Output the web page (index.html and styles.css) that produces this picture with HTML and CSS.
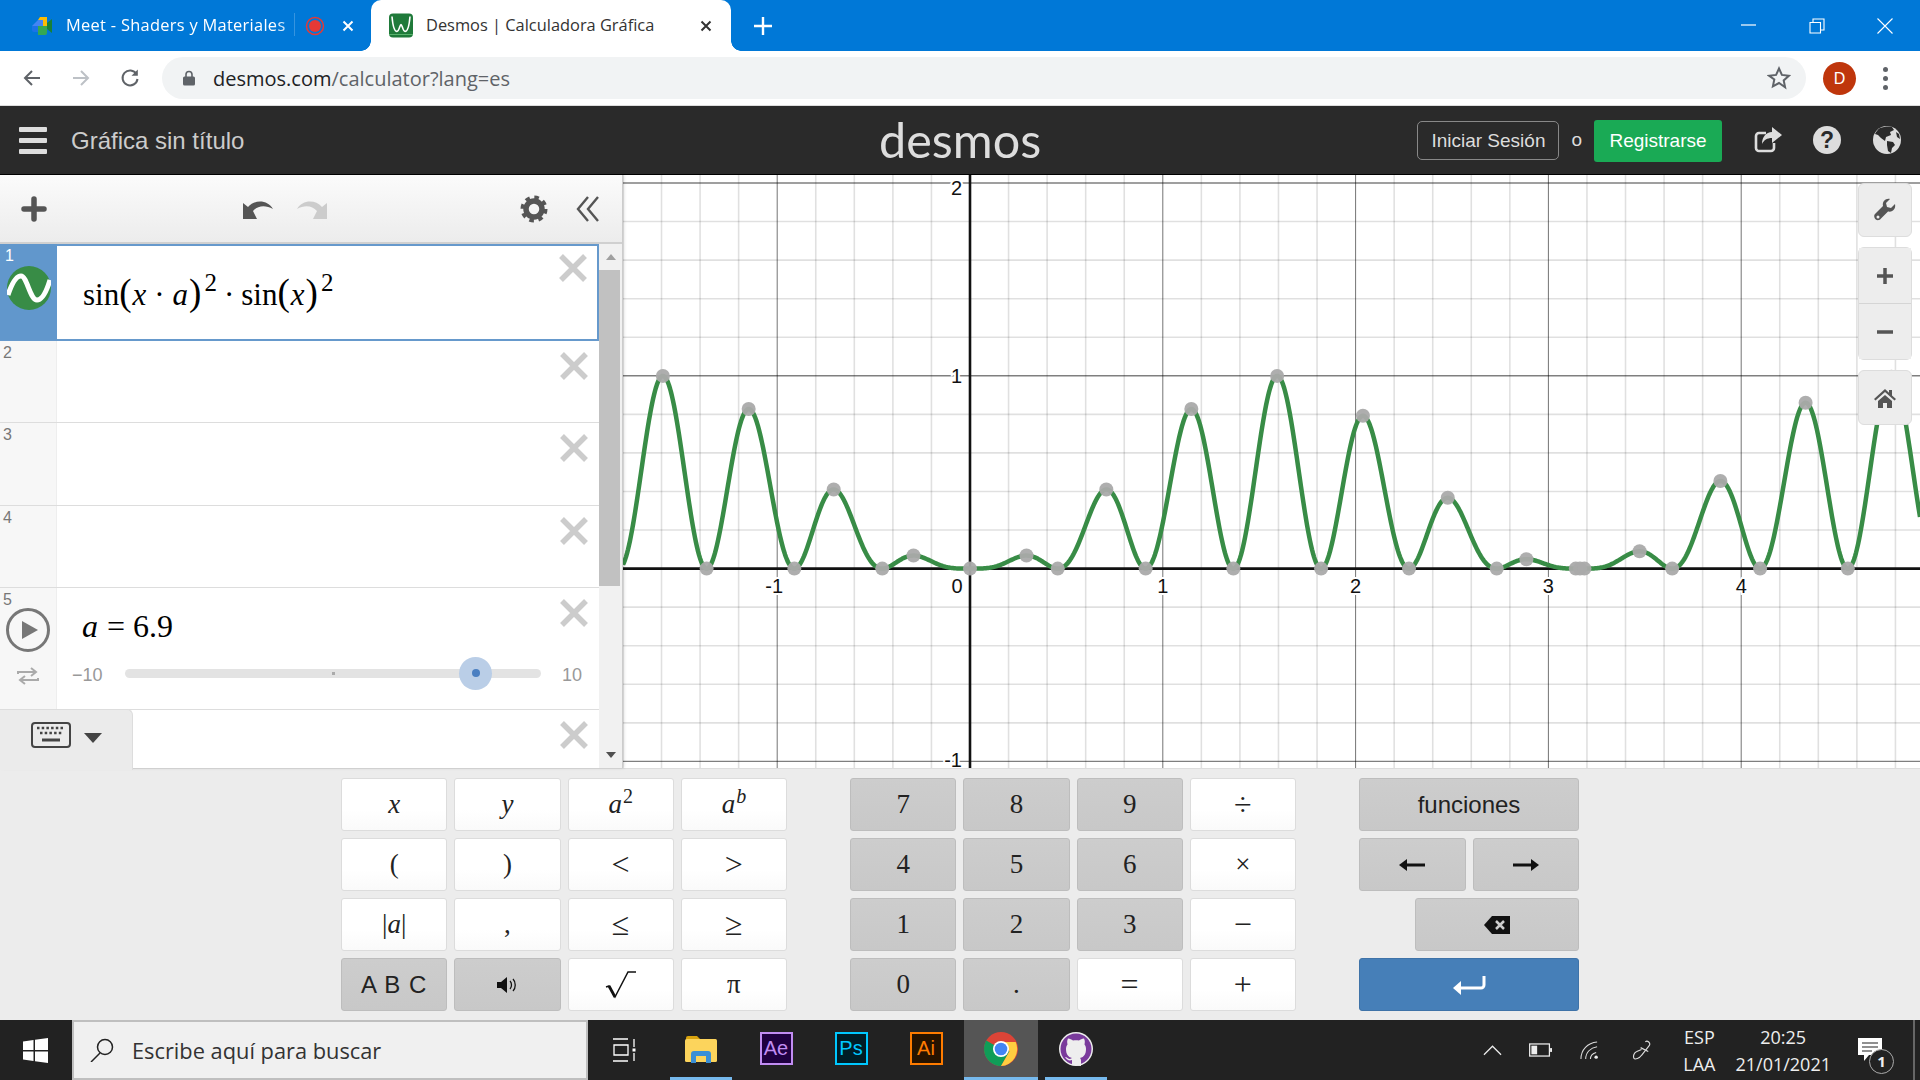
FILE: index.html
```html
<!DOCTYPE html>
<html lang="es">
<head>
<meta charset="UTF-8">
<title>Desmos | Calculadora Gráfica</title>
<link rel="stylesheet" href="styles.css">
</head>
<body>
<div class="app">

  <!-- browser tabs -->
  <div class="tabstrip">
    <div class="tab tab-bg">
      <svg class="favicon" viewBox="0 0 22 22"><path d="M1 11 7 5h5v6H1z" fill="#4285f4"/><path d="M7 5l2-3h7v9h-4V5z" fill="#fbbc04"/><path d="M1 11h6v6H3a2 2 0 0 1-2-2z" fill="#1a73e8"/><path d="M7 11h9v7a2 2 0 0 1-2 2H7z" fill="#34a853"/><path d="M16 8l5-4v14l-5-4z" fill="#188038"/></svg>
      <span class="tab-title tab-title-fade">Meet - Shaders y Materiales</span>
      <svg class="rec" viewBox="0 0 20 20"><circle cx="10" cy="10" r="8.5" fill="none" stroke="#e53935" stroke-width="1.5"/><circle cx="10" cy="10" r="6" fill="#e53935"/></svg>
      <svg class="tab-x" viewBox="0 0 12 12"><path d="M1.5 1.5l9 9M10.5 1.5l-9 9" stroke="#fff" stroke-width="2"/></svg>
    </div>
    <div class="tab tab-active">
      <svg class="favicon favicon-desmos" viewBox="0 0 24 24"><rect width="24" height="24" rx="4" fill="#1f7a3a"/><path d="M3 3c1 12 3 15 5 15s3-7 4-7 2 7 4 7 4-3 5-15" fill="none" stroke="#fff" stroke-width="1.6"/><path d="M0 21h24" stroke="#59b36d" stroke-width="1"/></svg>
      <span class="tab-title">Desmos | Calculadora Gráfica</span>
      <svg class="tab-x" viewBox="0 0 12 12"><path d="M1.5 1.5l9 9M10.5 1.5l-9 9" stroke="#333" stroke-width="2"/></svg>
    </div>
    <svg class="newtab" viewBox="0 0 18 18"><path d="M9 0v18M0 9h18" stroke="#fff" stroke-width="2.4"/></svg>
    <div class="winctl">
      <svg viewBox="0 0 16 16"><path d="M0 7h15" stroke="#fff" stroke-width="1.2"/></svg>
      <svg viewBox="0 0 16 16"><path d="M1 4.5h10.5V15H1zM4 4.5V1h11v11h-3.500" fill="none" stroke="#fff" stroke-width="1.1"/></svg>
      <svg viewBox="0 0 16 16"><path d="M.5.5l15 15M15.500.5l-15 15" stroke="#fff" stroke-width="1.1"/></svg>
    </div>
  </div>

  <!-- browser toolbar -->
  <div class="navbar">
    <svg class="nav-ico" viewBox="0 0 20 20"><path d="M18 10H3M10 3l-7 7 7 7" fill="none" stroke="#5f6368" stroke-width="2"/></svg>
    <svg class="nav-ico" viewBox="0 0 20 20"><path d="M2 10h15M10 3l7 7-7 7" fill="none" stroke="#bdc1c6" stroke-width="2"/></svg>
    <svg class="nav-ico" viewBox="0 0 20 20"><path d="M16.5 6A7.500 7.500 0 1 0 17.500 11" fill="none" stroke="#5f6368" stroke-width="2"/><path d="M17.800 1.500v6.300h-6.300z" fill="#5f6368"/></svg>
    <div class="omnibox">
      <svg class="lock" viewBox="0 0 12 16"><path d="M3 7V4.500a3 3 0 0 1 6 0V7" fill="none" stroke="#5f6368" stroke-width="1.6"/><rect y="6.500" width="12" height="9" rx="1.5" fill="#5f6368"/></svg>
      <span class="url">desmos.com<span class="url-rest">/calculator?lang=es</span></span>
      <svg class="star" viewBox="0 0 24 24"><path d="M12 2.500l2.900 6.400 7 .8-5.200 4.700 1.400 6.900L12 17l-6.100 3.300 1.400-6.900L2.100 9.700l7-.8z" fill="none" stroke="#5f6368" stroke-width="2"/></svg>
    </div>
    <div class="avatar">D</div>
    <div class="kebab"><i></i><i></i><i></i></div>
  </div>

  <!-- desmos header -->
  <header class="dcg-header">
    <div class="hamburger"><i></i><i></i><i></i></div>
    <span class="graph-title">Gráfica sin título</span>
    <span class="logo">desmos</span>
    <div class="header-right">
      <a class="btn-login">Iniciar Sesión</a>
      <span class="or">o</span>
      <a class="btn-signup">Registrarse</a>
      <svg class="hd-share" viewBox="0 0 28 28"><path d="M20 17v5a3 3 0 0 1-3 3H5a3 3 0 0 1-3-3V10a3 3 0 0 1 3-3h7" fill="none" stroke="#ddd" stroke-width="2.6"/><path d="M18 1l10 8-10 8v-5c-5 0-8 2-10 6 0-7 4-12 10-12z" fill="#ddd"/></svg>
      <div class="hd-help">?</div>
      <svg class="hd-globe" viewBox="0 0 30 30"><circle cx="15" cy="15" r="14" fill="#ddd"/><path d="M8 3c3-1 9-2 12-1l2 3-4 2 1 3-5 2-1 4-4-3-3-3-3-1C4 7 6 4 8 3zM15 16l6 1 2 3-3 3-1 5-3-2-1-6zM24 7l3 2 1 5-3-2z" fill="#2a2a2a"/></svg>
    </div>
  </header>

  <div class="workspace">
    <!-- expression list -->
    <section class="exp-panel">
      <div class="exp-toolbar">
        <svg class="tb-plus" viewBox="0 0 26 26"><path d="M13 3v20M3 13h20" stroke="#555" stroke-width="5.5" stroke-linecap="round"/></svg>
        <svg class="tb-undo" viewBox="0 0 32 22"><path d="M1 21V5l5 4C13 1 26 2 31 11 24 7 16 7 11 13l4 8z" fill="#555"/></svg>
        <svg class="tb-redo" viewBox="0 0 32 22"><path d="M31 21V5l-5 4C19 1 6 2 1 11 8 7 16 7 21 13l-4 8z" fill="#ccc"/></svg>
        <svg class="tb-gear" viewBox="0 0 28 28"><circle cx="14" cy="14" r="8" fill="none" stroke="#555" stroke-width="5.5"/><circle cx="14" cy="14" r="11.500" fill="none" stroke="#555" stroke-width="4" stroke-dasharray="4.5 4.53"/></svg>
        <svg class="tb-hide" viewBox="0 0 24 26"><path d="M12 1 2 13l10 12M22 1 12 13l10 12" fill="none" stroke="#555" stroke-width="2.4"/></svg>
      </div>
      <div class="exp-body">
        <div class="exp-list">
          <div class="exp-row row-focus">
            <div class="exp-tab"><span class="exp-num">1</span>
              <svg class="wave" viewBox="0 0 44 44"><circle cx="22" cy="22" r="22" fill="#388c46"/><path d="M1 29C6 14 10 10 14 10c6 0 9 24 16 24 5 0 9-7 13-20" fill="none" stroke="#fff" stroke-width="5"/></svg>
            </div>
            <div class="exp-main">
              <div class="math">sin<span class="par">(</span><i>x</i><span class="op">·</span><i>a</i><span class="par">)</span><sup>2</sup><span class="op">·</span>sin<span class="par">(</span><i>x</i><span class="par">)</span><sup>2</sup></div>
            </div>
            <svg class="del" viewBox="0 0 28 28"><path d="M2 2l24 24M26 2 2 26" stroke="#ccc" stroke-width="5.5"/></svg>
          </div>
          <div class="exp-row"><div class="exp-tab"><span class="exp-num">2</span></div><div class="exp-main"></div><svg class="del" viewBox="0 0 28 28"><path d="M2 2l24 24M26 2 2 26" stroke="#ccc" stroke-width="5.5"/></svg></div>
          <div class="exp-row"><div class="exp-tab"><span class="exp-num">3</span></div><div class="exp-main"></div><svg class="del" viewBox="0 0 28 28"><path d="M2 2l24 24M26 2 2 26" stroke="#ccc" stroke-width="5.5"/></svg></div>
          <div class="exp-row"><div class="exp-tab"><span class="exp-num">4</span></div><div class="exp-main"></div><svg class="del" viewBox="0 0 28 28"><path d="M2 2l24 24M26 2 2 26" stroke="#ccc" stroke-width="5.5"/></svg></div>
          <div class="exp-row row-slider">
            <div class="exp-tab"><span class="exp-num">5</span>
              <svg class="play" viewBox="0 0 44 44"><circle cx="22" cy="22" r="20.5" fill="none" stroke="#777" stroke-width="3"/><path d="M16 13l16 9-16 9z" fill="#777"/></svg>
              <svg class="loop" viewBox="0 0 24 18"><path d="M2 7V5h17M15 1l5 4-5 4M22 11v2H5M9 9l-5 4 5 4" fill="none" stroke="#aaa" stroke-width="2"/></svg>
            </div>
            <div class="exp-main">
              <div class="math math-slider"><i>a</i><span class="eq">=</span>6.9</div>
              <div class="slider">
                <span class="bound">−10</span>
                <div class="track"><b class="mid"></b><b class="halo"><b class="knob"></b></b></div>
                <span class="bound">10</span>
              </div>
            </div>
            <svg class="del" viewBox="0 0 28 28"><path d="M2 2l24 24M26 2 2 26" stroke="#ccc" stroke-width="5.5"/></svg>
          </div>
          <div class="exp-row row-last"><div class="exp-main"></div><svg class="del" viewBox="0 0 28 28"><path d="M2 2l24 24M26 2 2 26" stroke="#ccc" stroke-width="5.5"/></svg></div>
        </div>
        <div class="scrollbar">
          <span class="arrow-up"></span>
          <div class="thumb"></div>
          <span class="arrow-down"></span>
        </div>
      </div>
      <div class="kb-toggle">
        <svg class="kb-ico" viewBox="0 0 40 26"><rect x="1" y="1" width="38" height="24" rx="3" fill="none" stroke="#444" stroke-width="2"/><path d="M6 6h28M9 11h22" stroke="#444" stroke-width="2.5" stroke-dasharray="2.5 2.2"/><path d="M11 18h18" stroke="#444" stroke-width="3"/></svg>
        <span class="kb-caret"></span>
      </div>
    </section>

    <!-- graph -->
    <section class="graph">
      <svg id="graphSvg" class="graph-svg" width="1297" height="593"></svg>
      <div class="tools">
        <div class="tool-btn tool-wrench"><svg viewBox="0 0 24 24"><path d="M22 6l-4 4-4-1-1-4 4-4c-4-1-8 2-7 7L2 16c-2 2 0 7 4 6 .8 0 1.500-1 2-1.500l7-7c5 1 8-3 7-7.500z" fill="#555"/><circle cx="5" cy="19" r="1.5" fill="#eee"/></svg></div>
        <div class="tool-group">
          <div class="tool-btn"><svg viewBox="0 0 24 24"><path d="M12 4v16M4 12h16" stroke="#555" stroke-width="3.5"/></svg></div>
          <div class="tool-btn"><svg viewBox="0 0 24 24"><path d="M4 12h16" stroke="#555" stroke-width="3.5"/></svg></div>
        </div>
        <div class="tool-btn"><svg viewBox="0 0 24 24"><path d="M12 3 1 13l1.500 1.500L12 6l9.500 8.500L23 13l-4-3.600V4h-3v2.700z" fill="#555"/><path d="M5 15l7-6 7 6v7h-5v-5h-4v5H5z" fill="#555"/></svg></div>
      </div>
    </section>
  </div>

  <!-- on screen keypad -->
  <div class="keypad">
    <div class="key-group">
      <div class="key m"><i>x</i></div>
      <div class="key m"><i>y</i></div>
      <div class="key m"><i>a</i><sup>2</sup></div>
      <div class="key m"><i>a</i><sup><i>b</i></sup></div>
      <div class="key m">(</div>
      <div class="key m">)</div>
      <div class="key m rel">&lt;</div>
      <div class="key m rel">&gt;</div>
      <div class="key m">|<i>a</i>|</div>
      <div class="key m">,</div>
      <div class="key m rel">≤</div>
      <div class="key m rel">≥</div>
      <div class="key grey sans abc">A B C</div>
      <div class="key grey"><svg class="key-ico" viewBox="0 0 22 18"><path d="M1 6h4l6-5v16l-6-5H1z" fill="#111"/><path d="M14 5c2 2 2 6 0 8M17 3c3 3 3 9 0 12" fill="none" stroke="#111" stroke-width="1.3"/></svg></div>
      <div class="key"><svg class="key-sqrt" viewBox="0 0 32 28"><path d="M1 16l3-1 6 11L23 1h8" fill="none" stroke="#111" stroke-width="1.5"/><path d="M4 15l6 11" stroke="#111" stroke-width="2.8"/></svg></div>
      <div class="key m">π</div>
    </div>
    <div class="key-group">
      <div class="key grey m">7</div>
      <div class="key grey m">8</div>
      <div class="key grey m">9</div>
      <div class="key m rel">÷</div>
      <div class="key grey m">4</div>
      <div class="key grey m">5</div>
      <div class="key grey m">6</div>
      <div class="key m">×</div>
      <div class="key grey m">1</div>
      <div class="key grey m">2</div>
      <div class="key grey m">3</div>
      <div class="key m rel">−</div>
      <div class="key grey m">0</div>
      <div class="key grey m">.</div>
      <div class="key m rel">=</div>
      <div class="key m rel">+</div>
    </div>
    <div class="key-group key-group-nav">
      <div class="key grey sans wide">funciones</div>
      <div class="key grey"><svg class="key-arrow" viewBox="0 0 26 12"><path d="M26 6H6" stroke="#111" stroke-width="3"/><path d="M8 0 0 6l8 6z" fill="#111"/></svg></div>
      <div class="key grey"><svg class="key-arrow" viewBox="0 0 26 12"><path d="M0 6h20" stroke="#111" stroke-width="3"/><path d="M18 0l8 6-8 6z" fill="#111"/></svg></div>
      <div class="key grey backspace"><svg class="key-back" viewBox="0 0 26 18"><path d="M8 0h18v18H8L0 9z" fill="#111"/><path d="M12 5l8 8M20 5l-8 8" stroke="#ccc" stroke-width="2.5"/></svg></div>
      <div class="key enter wide"><svg class="key-enter" viewBox="0 0 34 20"><path d="M32 1v9a3 3 0 0 1-3 3H6" fill="none" stroke="#fff" stroke-width="3"/><path d="M9 6l-8 7 8 7z" fill="#fff"/></svg></div>
    </div>
  </div>

  <!-- windows taskbar -->
  <footer class="taskbar">
    <svg class="start" viewBox="0 0 25 25"><path d="M0 3.500l10.500-1.500v10H0zM12 1.800 25 0v12H12zM0 13.500h10.500V23L0 21.500zM12 13.500h13V25l-13-1.800z" fill="#fff"/></svg>
    <div class="search">
      <svg class="search-ico" viewBox="0 0 24 24"><circle cx="15" cy="9" r="7.5" fill="none" stroke="#222" stroke-width="1.5"/><path d="M10 15 1 24" stroke="#222" stroke-width="1.5"/></svg>
      <span>Escribe aquí para buscar</span>
    </div>
    <svg class="taskview" viewBox="0 0 24 24"><path d="M1 1h15M1 23h15M2 7h14v10H2zM22 1v8M22 15v8" fill="none" stroke="#fff" stroke-width="1.3"/><rect x="20.5" y="10.5" width="3" height="3" fill="#fff"/></svg>
    <div class="task-apps">
      <div class="app-slot on">
        <svg class="ico-folder" viewBox="0 0 32 28"><path d="M1 3a2 2 0 0 1 2-2h9l3 3H1z" fill="#d9a30e"/><rect x="0" y="4" width="32" height="23" rx="1.5" fill="#fcd45c"/><path d="M6 28V19a3 3 0 0 1 3-3h14a3 3 0 0 1 3 3v9h-5v-7H11v7z" fill="#3a8fd6"/></svg>
      </div>
      <div class="app-slot"><div class="adobe ae">Ae</div></div>
      <div class="app-slot"><div class="adobe ps">Ps</div></div>
      <div class="app-slot"><div class="adobe ai">Ai</div></div>
      <div class="app-slot on active">
        <svg class="ico-app" viewBox="0 0 34 34"><circle cx="17" cy="17" r="17" fill="#db4437"/><path d="M17 17 2.300 8.500A17 17 0 0 0 17 34l8.500-14.700z" fill="#0f9d58"/><path d="M17 10h14.700A17 17 0 0 1 17 34l8.500-14.700z" fill="#ffcd40"/><circle cx="17" cy="17" r="8" fill="#fff"/><circle cx="17" cy="17" r="6.3" fill="#4285f4"/></svg>
      </div>
      <div class="app-slot on">
        <svg class="ico-app" viewBox="0 0 34 34"><circle cx="17" cy="17" r="17" fill="#eee"/><circle cx="17" cy="17" r="15.5" fill="#7a3b9c"/><path d="M13 33v-5c-3 1-5 0-7-3 2 0 3 2 5 2l2-1c-4-1-6-4-6-9 0-2 .5-3 1.500-4.500C8 10 8 8.500 9 6.500c2 0 3.500 1 5 2 2-.5 4-.5 6 0 1.500-1 3-2 5-2 1 2 1 3.500.5 6 1 1.500 1.500 2.500 1.500 4.500 0 5-2 8-6 9 1 1 1 2 1 3v5z" fill="#eee"/></svg>
      </div>
    </div>
    <div class="tray">
      <svg class="tr-chev" viewBox="0 0 20 12"><path d="M1 11l9-9 9 9" fill="none" stroke="#eee" stroke-width="1.3"/></svg>
      <svg class="tr-batt" viewBox="0 0 24 14"><rect x=".7" y=".7" width="20.6" height="12.6" fill="none" stroke="#eee" stroke-width="1.3"/><rect x="2.500" y="2.500" width="6" height="9" fill="#eee"/><rect x="22" y="5" width="2" height="4" fill="#eee"/></svg>
      <svg class="tr-wifi" viewBox="0 0 20 20"><path d="M1 19C1 9 8 2 18 1M6 19C6 12 11 7 18 6M11 19c0-3 2-6 6-7" fill="none" stroke="#ddd" stroke-width="1.1"/><circle cx="17" cy="17" r="1.8" fill="#eee"/></svg>
      <svg class="tr-pen" viewBox="0 0 22 22"><path d="M14 2c2-2 6 1 4 4l-8 10c-2 3-7 5-8 3s0-6 3-7l5-2" fill="none" stroke="#ddd" stroke-width="1.2"/><path d="M9 8l8 4" stroke="#ddd" stroke-width="1.2"/></svg>
      <div class="tr-lang"><span>ESP</span><span>LAA</span></div>
      <div class="tr-clock"><span>20:25</span><span>21/01/2021</span></div>
      <div class="tr-notif">
        <svg viewBox="0 0 24 24"><path d="M0 0h24v17H11l-5 6v-6H0z" fill="#fff"/><path d="M4 5h16M4 9h16M4 13h10" stroke="#222" stroke-width="1.2"/></svg>
        <span class="tr-badge">1</span>
      </div>
    </div>
  </footer>
</div>
<script src="graph.js"></script>
</body>
</html>
```

FILE: styles.css
```css
* {
  box-sizing: border-box;
}
html, body {
  margin: 0;
  height: 100%;
  overflow: hidden;
}
body {
  font-family: "Liberation Sans", Arial, sans-serif;
  background-color: #fff;
}
svg {
  display: block;
  flex-shrink: 0;
}
.app {
  display: flex;
  flex-direction: column;
  height: 1080px;
}

/* tabs */
.tabstrip {
  display: flex;
  align-items: center;
  height: 51px;
  background-color: #0078d7;
  font-family: "Open Sans", sans-serif;
  font-size: 16.4px;
}
.tab {
  display: flex;
  align-items: center;
  height: 51px;
}
.tab-bg {
  width: 371px;
  padding-left: 31px;
  color: #fff;
}
.tab-active {
  position: relative;
  width: 360px;
  padding-left: 18px;
  background-color: #fff;
  border-radius: 10px 10px 0 0;
  color: #333;
}
.tab-active::before, .tab-active::after {
  content: "";
  position: absolute;
  bottom: 0;
  width: 10px;
  height: 10px;
  background: radial-gradient(circle at 0 0, #0078d7 9.5px, #fff 10px);
}
.tab-active::before {
  left: -10px;
}
.tab-active::after {
  right: -10px;
  background: radial-gradient(circle at 100% 0, #0078d7 9.5px, #fff 10px);
}
.favicon {
  width: 22px;
  height: 22px;
}
.favicon-desmos {
  width: 24px;
  height: 25px;
}
.tab-title {
  margin: -2px 0 0 13px;
  white-space: nowrap;
  overflow: hidden;
}
.tab-title-fade {
  width: 229px;
  padding-right: 7px;
  letter-spacing: .3px;
  border-right: 1px solid rgba(255,255,255,.35);
  -webkit-mask-image: linear-gradient(90deg, #000 90%, rgba(0,0,0,.6) 100%);
  mask-image: linear-gradient(90deg, #000 90%, rgba(0,0,0,.6) 100%);
}
.rec {
  width: 20px;
  height: 20px;
  margin-left: 10px;
}
.tab-x {
  width: 12px;
  height: 12px;
  margin-left: 17px;
}
.tab-active .tab-x {
  margin-left: auto;
  margin-right: 19px;
}
.newtab {
  width: 18px;
  height: 18px;
  margin-left: 23px;
}
.winctl {
  display: flex;
  align-items: center;
  gap: 52px;
  margin-left: auto;
  margin-right: 27px;
}
.winctl svg {
  width: 16px;
  height: 16px;
}

/* browser toolbar */
.navbar {
  display: flex;
  align-items: center;
  height: 55px;
  padding-left: 22px;
  background-color: #fff;
  border-bottom: 1px solid #ddd;
}
.nav-ico {
  width: 20px;
  height: 20px;
  margin-right: 29px;
}
.omnibox {
  display: flex;
  align-items: center;
  width: 1644px;
  height: 42px;
  margin-left: -7px;
  padding: 0 15px 0 21px;
  background-color: #f1f3f4;
  border-radius: 21px;
}
.lock {
  width: 12px;
  height: 16px;
}
.url {
  margin-left: 18px;
  font-family: "Open Sans", sans-serif;
  font-size: 20px;
  color: #202124;
}
.url-rest {
  color: #5f6368;
}
.star {
  width: 24px;
  height: 24px;
  margin-left: auto;
}
.avatar {
  width: 33px;
  height: 33px;
  margin-left: 17px;
  border-radius: 50%;
  background-color: #bf360c;
  color: #fff;
  font-size: 16px;
  line-height: 33px;
  text-align: center;
}
.kebab {
  display: flex;
  flex-direction: column;
  gap: 4px;
  margin-left: 27px;
}
.kebab i {
  width: 5px;
  height: 5px;
  border-radius: 50%;
  background-color: #5f6368;
}

/* desmos header */
.dcg-header {
  position: relative;
  display: flex;
  align-items: center;
  height: 69px;
  padding-left: 19px;
  background-color: #2a2a2a;
  border-bottom: 1px solid #000;
}
.hamburger {
  display: flex;
  flex-direction: column;
  gap: 6px;
}
.hamburger i {
  display: block;
  width: 28px;
  height: 5px;
  background-color: #ddd;
  border-radius: 1px;
}
.graph-title {
  margin: 2px 0 0 24px;
  font-size: 24px;
  color: #ccc;
}
.logo {
  position: absolute;
  left: 879px;
  top: 2px;
  font-family: "Lato", sans-serif;
  font-size: 48.5px;
  color: #ddd;
  line-height: 62px;
}
.header-right {
  display: flex;
  align-items: center;
  margin-left: auto;
  padding-right: 18px;
}
.btn-login {
  width: 142px;
  height: 39px;
  border: 1px solid #888;
  border-radius: 5px;
  font-size: 19px;
  color: #ddd;
  line-height: 37px;
  text-align: center;
}
.or {
  margin: 0 12px;
  font-size: 19px;
  color: #ddd;
}
.btn-signup {
  width: 128px;
  height: 42px;
  margin-top: 1px;
  background-color: #1aaa55;
  border-radius: 3px;
  font-size: 19px;
  color: #fff;
  line-height: 42px;
  text-align: center;
}
.hd-share {
  width: 28px;
  height: 28px;
  margin-left: 32px;
}
.hd-help {
  width: 28px;
  height: 28px;
  margin-left: 31px;
  border-radius: 50%;
  background-color: #ddd;
  color: #2a2a2a;
  font-size: 23px;
  font-weight: bold;
  line-height: 28px;
  text-align: center;
}
.hd-globe {
  width: 30px;
  height: 30px;
  margin-left: 31px;
}

/* panel */
.workspace {
  display: flex;
  height: 593px;
}
.exp-panel {
  position: relative;
  display: flex;
  flex-direction: column;
  width: 623px;
  border-right: 1px solid #ccc;
  background-color: #f1f1f1;
  box-shadow: 1px 0 3px rgba(0,0,0,.15);
  z-index: 1;
}
.exp-toolbar {
  display: flex;
  align-items: center;
  height: 69px;
  padding-left: 21px;
  background: linear-gradient(#fbfbfb, #ececec);
  border-bottom: 2px solid #d0d0d0;
}
.tb-plus {
  width: 26px;
  height: 26px;
}
.tb-undo, .tb-redo {
  width: 32px;
  height: 22px;
}
.tb-undo {
  margin-left: 195px;
}
.tb-redo {
  margin-left: 22px;
}
.tb-gear {
  width: 28px;
  height: 28px;
  margin-left: 192px;
}
.tb-hide {
  width: 24px;
  height: 26px;
  margin-left: 28px;
}
.exp-body {
  display: flex;
  flex: 1;
  min-height: 0;
}
.exp-list {
  width: 599px;
  overflow: hidden;
  background-color: #fff;
}
.exp-row {
  display: flex;
  align-items: flex-start;
  height: 82.4px;
  border-bottom: 1px solid #ddd;
}
.exp-tab {
  display: flex;
  flex-direction: column;
  align-items: center;
  width: 57px;
  height: 100%;
  background-color: #f7f7f7;
  border-right: 1px solid #eee;
}
.exp-num {
  align-self: flex-start;
  margin: 4px 0 0 3px;
  font-size: 16px;
  color: #777;
  line-height: 16px;
}
.exp-main {
  flex: 1;
  min-width: 0;
}
.del {
  width: 28px;
  height: 28px;
  margin: 11px 11px 0 0;
}
.row-focus {
  height: 96.8px;
  border: 2px solid #6699cc;
  border-left: 0;
}
.row-focus .exp-tab {
  background-color: #6197cc;
  border-right: 0;
  margin-top: -2px;
  height: 96px;
}
.row-focus .exp-num {
  margin-left: 5px;
  color: #fff;
}
.row-focus .del {
  margin: 8px 10px 0 0;
}
.wave {
  width: 44px;
  height: 44px;
  margin-top: 2px;
}
.math {
  display: flex;
  align-items: baseline;
  margin: 31px 0 0 26px;
  font-family: "Liberation Serif", serif;
  font-size: 31px;
  color: #000;
  white-space: nowrap;
}
.math i {
  padding: 0 1px;
}
.math .par {
  font-size: 37px;
  font-weight: normal;
  line-height: 30px;
}
.math .op {
  margin: 0 7px;
}
.math sup {
  margin-left: 3px;
  font-size: 25px;
  line-height: 20px;
  vertical-align: baseline;
  position: relative;
  top: -14px;
}
.row-slider {
  height: 122px;
}
.play {
  width: 44px;
  height: 44px;
  margin-top: 0;
}
.loop {
  width: 24px;
  height: 18px;
  margin-top: 15px;
}
.math-slider {
  margin-top: 20px;
  margin-left: 24px;
  font-size: 32px;
}
.eq {
  margin: 0 8px;
}
.slider {
  display: flex;
  align-items: center;
  margin-top: 20px;
  margin-left: 15px;
}
.bound {
  flex-shrink: 0;
  width: 53px;
  font-size: 18px;
  color: #999;
}
.bound:last-child {
  width: auto;
  margin-left: 21px;
}
.track {
  position: relative;
  flex-shrink: 0;
  width: 416px;
  height: 9px;
  background-color: #e3e3e3;
  border-radius: 5px;
  margin-top: -4px;
}
.mid {
  position: absolute;
  left: 207px;
  top: 3px;
  width: 3px;
  height: 3px;
  background-color: #aaa;
}
.halo {
  position: absolute;
  left: 334px;
  top: -12px;
  display: flex;
  align-items: center;
  justify-content: center;
  width: 33px;
  height: 33px;
  border-radius: 50%;
  background-color: #bacee7;
}
.knob {
  width: 8px;
  height: 8px;
  border-radius: 50%;
  background-color: #4a7fc1;
}
.row-last {
  height: 60px;
  border-bottom: 0;
}
.row-last .exp-main {
  margin-left: 57px;
}
.scrollbar {
  display: flex;
  flex-direction: column;
  align-items: center;
  width: 23px;
  padding-bottom: 7px;
  background-color: #f1f1f1;
}
.arrow-up, .arrow-down {
  width: 0;
  height: 0;
  border-left: 5px solid transparent;
  border-right: 5px solid transparent;
}
.arrow-up {
  margin-top: 10px;
  border-bottom: 6px solid #a0a0a0;
}
.arrow-down {
  border-top: 6px solid #505050;
}
.thumb {
  width: 21px;
  height: 316px;
  margin: 10px 2px 166px 0;
  background-color: #c1c1c1;
}
.kb-toggle {
  position: absolute;
  left: 0;
  bottom: -2px;
  display: flex;
  align-items: center;
  gap: 13px;
  width: 133px;
  height: 61px;
  padding: 0 0 10px 31px;
  background-color: #ebebeb;
  border: 1px solid #ddd;
  border-left: 0;
  border-bottom: 0;
  border-radius: 0 6px 0 0;
}
.kb-ico {
  width: 40px;
  height: 26px;
}
.kb-caret {
  width: 0;
  height: 0;
  margin-top: 5px;
  border-left: 9px solid transparent;
  border-right: 9px solid transparent;
  border-top: 10px solid #444;
}

/* graph */
.graph {
  position: relative;
  flex: 1;
  overflow: hidden;
  background-color: #fff;
}
.graph-svg {
  font-family: "Liberation Sans", Arial, sans-serif;
  font-size: 20px;
}
.tools {
  position: absolute;
  top: 8px;
  right: 8px;
  display: flex;
  flex-direction: column;
  gap: 10px;
  width: 54px;
}
.tool-group {
  display: flex;
  flex-direction: column;
  background-color: #ededed;
  border: 1px solid #ddd;
  border-radius: 6px;
}
.tool-btn {
  display: flex;
  align-items: center;
  justify-content: center;
  height: 55px;
  background-color: #ededed;
  border: 1px solid #ddd;
  border-radius: 6px;
}
.tool-wrench {
  height: 54px;
}
.tool-group .tool-btn {
  height: 55.5px;
  padding-top: 2px;
  border: 0;
  border-radius: 0;
}
.tool-group .tool-btn:first-child {
  border-bottom: 1px solid #d5d5d5;
}
.tool-btn svg {
  width: 24px;
  height: 24px;
}

/* keypad */
.keypad {
  display: flex;
  justify-content: center;
  gap: 63px;
  height: 252px;
  padding-top: 9px;
  background-color: #ececec;
  border-top: 1px solid #ddd;
}
.key-group {
  display: grid;
  grid-template-columns: repeat(4, 106.25px);
  grid-template-rows: repeat(4, 53px);
  gap: 7px;
}
.key-group-nav {
  grid-template-columns: repeat(2, 106.5px);
}
.key {
  display: flex;
  align-items: center;
  justify-content: center;
  background: linear-gradient(#fff 60%, #fafafa);
  border: 1px solid #dcdcdc;
  border-radius: 3px;
  color: #222;
}
.key.m {
  font-family: "Liberation Serif", serif;
  font-size: 27px;
  font-weight: normal;
}
.key.rel {
  font-size: 32px;
  font-weight: normal;
}
.key.m sup {
  margin-left: 1px;
  font-size: 20px;
  line-height: 1;
  vertical-align: baseline;
  position: relative;
  top: -9px;
}
.key.grey {
  background: linear-gradient(#cdcdcd, #c8c8c8);
  border-color: #bdbdbd;
}
.key.sans {
  font-family: "Liberation Sans", Arial, sans-serif;
  font-size: 24px;
}
.key.abc {
  letter-spacing: 1px;
  font-size: 24px;
}
.wide {
  grid-column: span 2;
}
.backspace {
  grid-column: 1 / span 2;
  margin-left: 56px;
}
.key.enter {
  background: #467fb8;
  border-color: #3f73a8;
}
.key-ico {
  width: 22px;
  height: 18px;
}
.key-sqrt {
  width: 32px;
  height: 28px;
}
.key-arrow {
  width: 26px;
  height: 12px;
}
.key-back {
  width: 26px;
  height: 18px;
}
.key-enter {
  width: 34px;
  height: 20px;
}

/* taskbar */
.taskbar {
  display: flex;
  align-items: center;
  height: 60px;
  padding-right: 5px;
  background-color: #222;
  color: #eee;
}
.start {
  width: 25px;
  height: 25px;
  margin-left: 23px;
}
.search {
  display: flex;
  align-items: center;
  width: 516px;
  height: 60px;
  margin-left: 24px;
  padding-left: 16px;
  background-color: #f0f0f0;
  border: 2px solid #bfbfbf;
  font-family: "Open Sans", sans-serif;
  font-size: 21.8px;
  color: #333;
}
.search-ico {
  width: 24px;
  height: 24px;
  margin-right: 18px;
}
.taskview {
  width: 24px;
  height: 24px;
  margin-left: 24px;
}
.task-apps {
  display: flex;
  margin-left: 34px;
  gap: 13px;
}
.app-slot {
  display: flex;
  align-items: center;
  justify-content: center;
  width: 62px;
  height: 60px;
  padding-bottom: 3px;
}
.app-slot.on {
  border-bottom: 3px solid #76b9ed;
  padding-bottom: 0;
}
.app-slot.active {
  width: 74px;
  margin: 0 -6px;
  background-color: #555;
}
.ico-folder {
  width: 32px;
  height: 28px;
}
.ico-app {
  width: 34px;
  height: 34px;
}
.adobe {
  width: 33px;
  height: 33px;
  border: 2px solid;
  font-size: 20px;
  line-height: 28px;
  text-align: center;
}
.ae {
  background-color: #1f0040;
  border-color: #c18cf2;
  color: #c18cf2;
}
.ps {
  background-color: #001d26;
  border-color: #00c8ff;
  color: #00c8ff;
}
.ai {
  background-color: #261300;
  border-color: #ff7c00;
  color: #ff7c00;
}
.tray {
  display: flex;
  align-items: center;
  margin-left: auto;
  padding-right: 7px;
  height: 60px;
  border-right: 2px solid #666;
  font-family: "Open Sans", sans-serif;
  font-size: 18px;
}
.tr-chev {
  width: 19px;
  height: 12px;
}
.tr-batt {
  width: 23px;
  height: 14px;
  margin-left: 27px;
}
.tr-wifi {
  width: 19px;
  height: 19px;
  margin-left: 28px;
}
.tr-pen {
  width: 21px;
  height: 21px;
  margin-left: 33px;
}
.tr-lang, .tr-clock {
  display: flex;
  flex-direction: column;
  align-items: center;
  gap: 5px;
  line-height: 22px;
}
.tr-lang {
  margin-left: 30px;
}
.tr-clock {
  margin-left: 20px;
}
.tr-notif {
  position: relative;
  margin-left: 27px;
  margin-right: 24px;
}
.tr-notif svg {
  width: 24px;
  height: 24px;
}
.tr-badge {
  position: absolute;
  left: 11px;
  top: 11px;
  width: 25px;
  height: 25px;
  border: 1px solid #aaa;
  border-radius: 50%;
  background-color: #222;
  font-size: 15px;
  font-weight: bold;
  line-height: 23px;
  text-align: center;
}
```

FILE: graph.js
```js
// draws grid, axes and the curve for sin(x*a)^2 * sin(x)^2, a = 6.9
var svg = document.getElementById("graphSvg");
var NS = "http://www.w3.org/2000/svg";
var originX = 347, originY = 393.6, unit = 192.8;
var width = 1297, height = 593;
var a = 6.9;

function add(name, attrs, text) {
  var el = document.createElementNS(NS, name);
  for (var key in attrs) {
    el.setAttribute(key, attrs[key]);
  }
  if (text) el.textContent = text;
  svg.appendChild(el);
  return el;
}

function f(x) {
  var s1 = Math.sin(x * a), s2 = Math.sin(x);
  return s1 * s1 * s2 * s2;
}

function toX(x) { return originX + x * unit; }
function toY(y) { return originY - y * unit; }

// grid lines every 0.2, darker on whole numbers
for (var i = -10; i <= 25; i++) {
  var px = toX(i / 5);
  var major = i % 5 === 0;
  add("line", {
    x1: px, x2: px, y1: 0, y2: height,
    stroke: major ? "rgba(0,0,0,.55)" : "rgba(0,0,0,.12)",
    "stroke-width": major ? 1 : 1.6
  });
}
for (var j = -6; j <= 11; j++) {
  var py = toY(j / 5);
  var majorY = j % 5 === 0;
  add("line", {
    x1: 0, x2: width, y1: py, y2: py,
    stroke: majorY ? "rgba(0,0,0,.5)" : "rgba(0,0,0,.12)",
    "stroke-width": majorY ? 1.4 : 1.6
  });
}

// axes
add("line", { x1: 0, x2: width, y1: originY, y2: originY, stroke: "#111", "stroke-width": 2.6 });
add("line", { x1: originX, x2: originX, y1: 0, y2: height, stroke: "#111", "stroke-width": 2.6 });

// labels
function label(x, y, text, anchor) {
  add("text", {
    x: x, y: y, "text-anchor": anchor, fill: "#111",
    stroke: "#fff", "stroke-width": 4, "paint-order": "stroke"
  }, text);
}
[-1, 0, 1, 2, 3, 4].forEach(function(n) {
  var lx = n === 0 ? originX - 13 : toX(n);
  label(lx - (n < 0 ? 3 : 0), originY + 24, String(n), "middle");
});
label(originX - 8, toY(2) + 12, "2", "end");
label(originX - 8, toY(1) + 7, "1", "end");
label(originX - 8, toY(-1) + 6, "-1", "end");

// curve
var d = "";
for (var px2 = 0; px2 <= width; px2 += 1) {
  var vx = (px2 - originX) / unit;
  d += (d ? "L" : "M") + px2 + " " + toY(f(vx)).toFixed(2);
}
add("path", { d: d, fill: "none", stroke: "#388c46", "stroke-width": 4.5, "stroke-linejoin": "round" });

// grey dots on every max and min
var step = 0.001;
for (var x = -1.8; x < 4.95; x += step) {
  var prev = f(x - step), cur = f(x), next = f(x + step);
  if ((cur >= prev && cur > next) || (cur <= prev && cur < next)) {
    add("circle", { cx: toX(x), cy: toY(cur), r: 7, fill: "#aaa", "fill-opacity": 0.95 });
  }
}
```
